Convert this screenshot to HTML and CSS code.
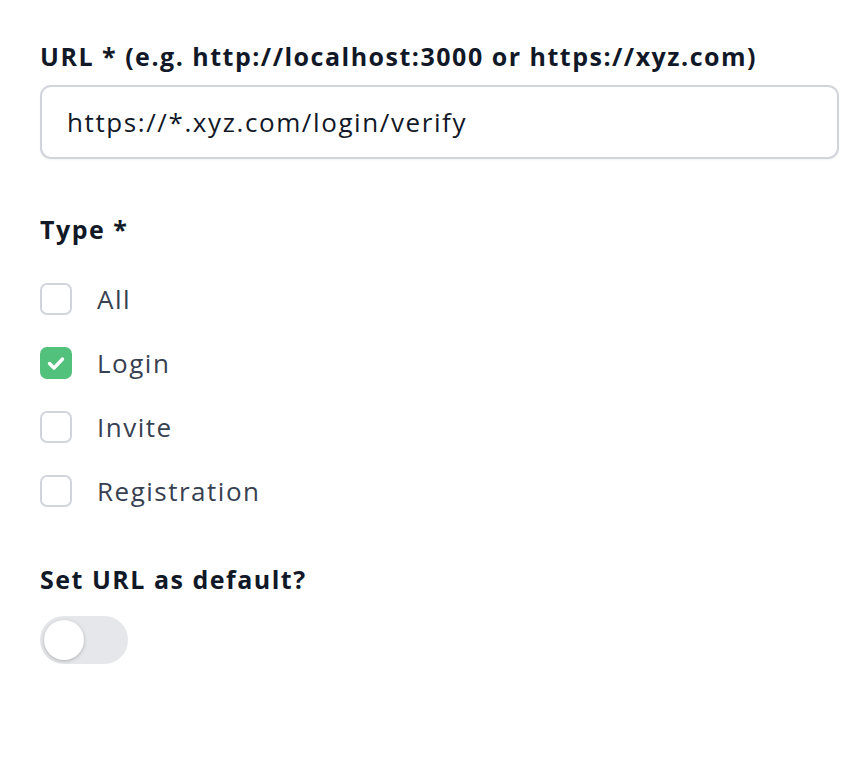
FILE: index.html
```html
<!DOCTYPE html>
<html lang="en">
<head>
<meta charset="utf-8">
<title>URL form</title>
<link rel="stylesheet" href="styles.css">
</head>
<body>
<form class="form">
  <div class="field">
    <label class="label" for="url">URL * (e.g. http://localhost:3000 or https://xyz.com)</label>
    <input class="input" id="url" type="text" value="https://*.xyz.com/login/verify">
  </div>
  <div class="field field-type">
    <div class="label">Type *</div>
    <div class="options">
      <label class="option"><span class="box"></span><span class="opt-text">All</span></label>
      <label class="option"><span class="box checked"><svg viewBox="0 0 32 32" width="32" height="32"><path d="M9.5 16.5l4.5 4.5 8.5-9" fill="none" stroke="#fff" stroke-width="3.4" stroke-linecap="round" stroke-linejoin="round"/></svg></span><span class="opt-text">Login</span></label>
      <label class="option"><span class="box"></span><span class="opt-text">Invite</span></label>
      <label class="option"><span class="box"></span><span class="opt-text">Registration</span></label>
    </div>
  </div>
  <div class="field field-default">
    <div class="label">Set URL as default?</div>
    <span class="toggle"><span class="knob"></span></span>
  </div>
</form>
</body>
</html>
```
FILE: styles.css
```css
* { box-sizing: border-box; }
html, body { margin: 0; padding: 0; background: #fff; }
body {
  font-family: "Open Sans", "Noto Sans", sans-serif;
  color: #111827;
}
.form {
  display: flex;
  flex-direction: column;
  padding: 38px 29px 0 40px;
}
.field { display: flex; flex-direction: column; }
.label {
  font-size: 25px;
  font-weight: 700;
  line-height: 36px;
  letter-spacing: 1.5px;
  color: #111827;
}
.input {
  margin-top: 11px;
  height: 74px;
  width: 100%;
  border: 2px solid #d1d5db;
  border-radius: 11px;
  padding: 0 25px;
  font-family: inherit;
  font-size: 26px;
  letter-spacing: 1.6px;
  color: #111827;
  background: #fff;
  box-shadow: 0 1px 2px rgba(0,0,0,0.05);
  outline: none;
}
.field-type { margin-top: 52px; }
.options {
  display: flex;
  flex-direction: column;
  gap: 32px;
  margin-top: 36px;
}
.option {
  display: flex;
  align-items: center;
  gap: 25px;
  height: 32px;
}
.box {
  width: 32px;
  height: 32px;
  border: 2px solid #d1d5db;
  border-radius: 7px;
  background: #fff;
  flex: none;
  display: flex;
}
.box.checked {
  background: #52c17c;
  border-color: #52c17c;
}
.box.checked svg { margin: -2px; }
.opt-text {
  font-size: 26px;
  letter-spacing: 1.5px;
  color: #374151;
}
.field-default { margin-top: 54px; }
.toggle {
  margin-top: 19px;
  width: 88px;
  height: 48px;
  border-radius: 24px;
  background: #e5e7eb;
  padding: 4px;
  display: flex;
}
.knob {
  width: 40px;
  height: 40px;
  border-radius: 50%;
  background: #fff;
  box-shadow: 0 1px 4px rgba(0,0,0,0.18), 0 1px 2px rgba(0,0,0,0.08);
}
```
